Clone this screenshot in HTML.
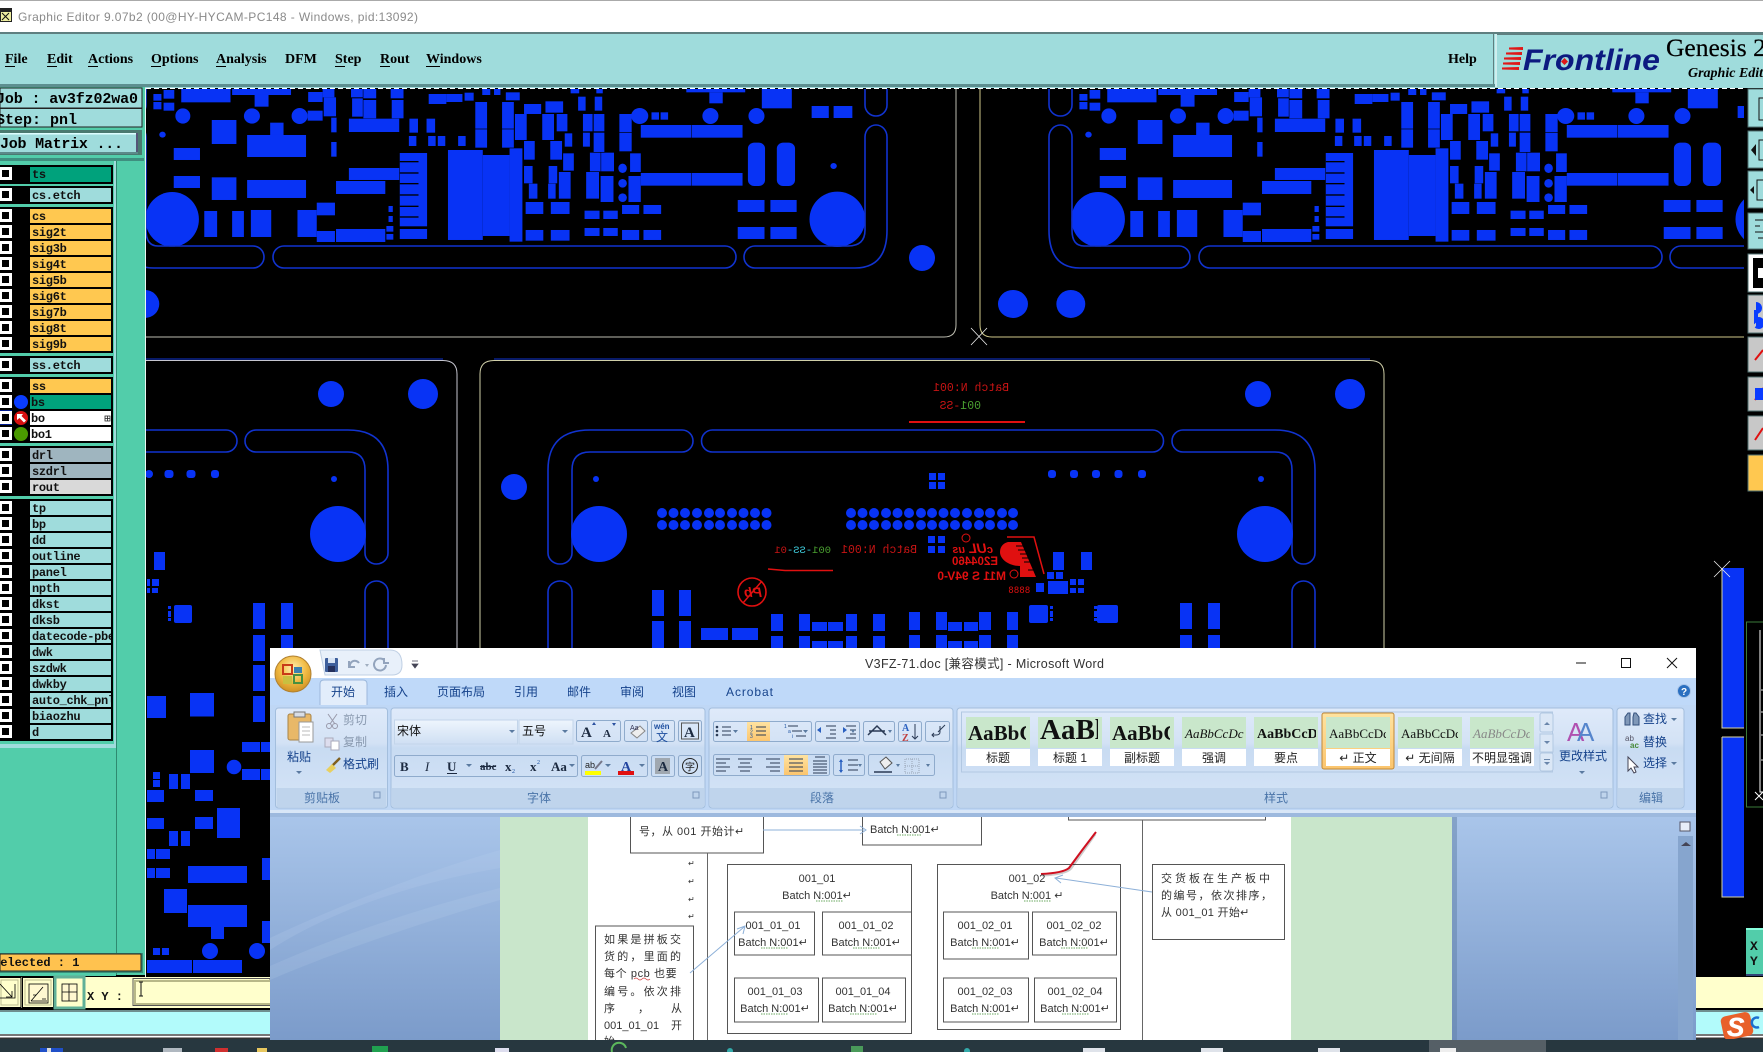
<!DOCTYPE html>
<html><head><meta charset="utf-8"><title>Graphic Editor</title>
<style>
html,body{margin:0;padding:0;background:#000;width:1763px;height:1052px;overflow:hidden}
svg{display:block}
.m{font-family:"Liberation Serif",serif;font-weight:bold;font-size:14px;fill:#000}
.job{font-family:"Liberation Mono",monospace;font-size:15px;font-weight:bold;fill:#000}
.l text{font-family:"Liberation Mono",monospace;font-weight:bold;font-size:12px;letter-spacing:-.3px;fill:#111}
.cj{font-family:"Liberation Sans","Noto Sans CJK SC",sans-serif;font-size:12px}
.tb{fill:#15428b}.gl{fill:#4a74a8;text-anchor:middle}
.d{font-family:"Liberation Sans","Noto Sans CJK SC",sans-serif;font-size:11px;fill:#333}
.dc{text-anchor:middle}
.sl{text-anchor:middle;fill:#222}
.mir{font-family:"Liberation Mono",monospace;font-size:11.5px}
.box{fill:#fff;stroke:#555;stroke-width:1}
.rb{fill:none;stroke:#8fabcc;stroke-width:1}
</style></head><body>
<svg xmlns="http://www.w3.org/2000/svg" width="1763" height="1052" viewBox="0 0 1763 1052">
<defs>
<clipPath id="cv"><rect x="146" y="89" width="1598" height="888"/></clipPath>
<clipPath id="w"><rect x="270" y="817" width="1426" height="223"/></clipPath>
<linearGradient id="gp" x1="0" y1="0" x2="0" y2="1"><stop offset="0" stop-color="#dfeafa"/><stop offset=".35" stop-color="#d3e2f5"/><stop offset=".4" stop-color="#c8dbf2"/><stop offset="1" stop-color="#d6e5f7"/></linearGradient>
<linearGradient id="gd" x1="0" y1="0" x2="0" y2="1"><stop offset="0" stop-color="#a9c5ea"/><stop offset="1" stop-color="#7b9bca"/></linearGradient>
<linearGradient id="gh" x1="0" y1="0" x2="0" y2="1"><stop offset="0" stop-color="#ffe3a0"/><stop offset="1" stop-color="#fbc56e"/></linearGradient>
<radialGradient id="go" cx=".5" cy=".35" r=".7"><stop offset="0" stop-color="#fff0b0"/><stop offset=".55" stop-color="#f0b840"/><stop offset="1" stop-color="#c88a20"/></radialGradient>
<linearGradient id="gb" x1="0" y1="0" x2="0" y2="1"><stop offset="0" stop-color="#eef5fd"/><stop offset="1" stop-color="#cfdff3"/></linearGradient>
<g id="c"><rect width="12" height="13" fill="#fff"/><rect x="2" y="3" width="7" height="7" fill="#000"/></g>
<g id="pcb" transform="translate(140,80) scale(.5356,.3333)" fill="#0833f5">
<rect x="25" y="42" width="15" height="20"/><rect x="25" y="66" width="15" height="22"/><rect x="44" y="30" width="20" height="26"/><rect x="44" y="68" width="20" height="24"/>
<rect x="77" y="25" width="92" height="42"/><rect x="172" y="25" width="110" height="20"/><rect x="214" y="45" width="26" height="35"/>
<rect x="314" y="36" width="27" height="30"/><rect x="341" y="25" width="22" height="27"/><rect x="343" y="52" width="23" height="57"/>
<rect x="394" y="25" width="22" height="27"/><rect x="417" y="25" width="24" height="30"/><rect x="396" y="55" width="20" height="55"/><rect x="417" y="60" width="24" height="55"/>
<rect x="468" y="25" width="24" height="30"/><rect x="470" y="60" width="22" height="55"/>
<ellipse cx="80" cy="108" rx="14" ry="23"/><ellipse cx="209" cy="108" rx="15" ry="23"/><ellipse cx="298" cy="108" rx="15" ry="24"/>
<rect x="313" y="92" width="28" height="30"/><ellipse cx="42" cy="164" rx="6" ry="9"/>
<rect x="134" y="120" width="46" height="72"/><rect x="243" y="128" width="25" height="40"/><rect x="200" y="165" width="110" height="66"/>
<rect x="63" y="204" width="49" height="36"/><rect x="63" y="288" width="49" height="36"/><rect x="134" y="292" width="46" height="68"/><rect x="200" y="300" width="110" height="54"/>
<ellipse cx="60" cy="418" rx="50" ry="82"/>
<rect x="120" y="393" width="24" height="78"/><rect x="172" y="393" width="22" height="78"/><rect x="207" y="390" width="38" height="81"/><rect x="294" y="390" width="36" height="81"/>
<rect x="330" y="368" width="34" height="38"/><rect x="330" y="453" width="34" height="33"/><rect x="366" y="447" width="92" height="39"/>
<rect x="366" y="303" width="92" height="39"/><rect x="390" y="264" width="94" height="36"/><rect x="390" y="116" width="94" height="40"/>
<rect x="357" y="113" width="10" height="44"/><rect x="357" y="186" width="10" height="44"/>
<rect x="503" y="116" width="16" height="42"/><rect x="535" y="116" width="16" height="42"/>
<rect x="502" y="168" width="14" height="30"/><rect x="538" y="168" width="14" height="30"/><rect x="556" y="168" width="14" height="30"/><rect x="594" y="168" width="14" height="30"/>
<rect x="464" y="378" width="8" height="18"/><rect x="464" y="408" width="8" height="18"/><rect x="460" y="438" width="13" height="17"/><rect x="460" y="462" width="13" height="17"/>
<rect x="485" y="219" width="51" height="220"/><rect x="485" y="447" width="51" height="30"/>
<g fill="#000"><rect x="485" y="243" width="35" height="4"/><rect x="485" y="277" width="35" height="4"/><rect x="485" y="309" width="35" height="4"/><rect x="485" y="343" width="35" height="4"/><rect x="485" y="377" width="35" height="4"/><rect x="485" y="409" width="35" height="4"/></g>
<rect x="575" y="210" width="65" height="270"/><rect x="640" y="225" width="50" height="243"/><rect x="690" y="205" width="24" height="280"/>
<rect x="539" y="42" width="33" height="30"/><rect x="572" y="42" width="30" height="24"/><rect x="606" y="38" width="17" height="24"/><rect x="683" y="37" width="26" height="24"/><rect x="639" y="25" width="15" height="20"/><rect x="661" y="25" width="12" height="20"/>
<rect x="626" y="66" width="22" height="80"/><rect x="626" y="148" width="22" height="55"/><rect x="676" y="66" width="22" height="80"/><rect x="676" y="148" width="22" height="55"/>
<rect x="700" y="102" width="22" height="78"/><rect x="717" y="72" width="32" height="30"/><rect x="757" y="64" width="33" height="34"/><rect x="751" y="102" width="22" height="78"/><rect x="778" y="102" width="20" height="52"/>
<rect x="717" y="183" width="20" height="56"/><rect x="766" y="183" width="22" height="56"/><rect x="793" y="160" width="14" height="40"/><rect x="790" y="220" width="20" height="52"/>
<rect x="717" y="258" width="16" height="52"/><rect x="763" y="258" width="16" height="52"/><rect x="726" y="311" width="16" height="45"/><rect x="762" y="311" width="14" height="45"/><rect x="782" y="276" width="22" height="80"/>
<rect x="720" y="366" width="33" height="36"/><rect x="767" y="366" width="35" height="36"/><rect x="720" y="450" width="33" height="32"/><rect x="767" y="450" width="35" height="32"/>
<rect x="818" y="50" width="14" height="42"/><rect x="849" y="50" width="14" height="42"/><rect x="804" y="25" width="16" height="15"/><rect x="852" y="25" width="12" height="15"/>
<rect x="827" y="102" width="18" height="52"/><rect x="847" y="102" width="20" height="52"/><rect x="827" y="158" width="13" height="42"/><rect x="847" y="158" width="20" height="58"/>
<rect x="840" y="218" width="20" height="56"/><rect x="861" y="218" width="24" height="56"/><rect x="833" y="276" width="24" height="80"/><rect x="860" y="288" width="24" height="78"/>
<ellipse cx="901" cy="265" rx="8" ry="14"/><ellipse cx="901" cy="310" rx="8" ry="13"/><ellipse cx="901" cy="353" rx="8" ry="13"/>
<rect x="915" y="220" width="20" height="56"/><rect x="912" y="288" width="23" height="78"/><rect x="895" y="102" width="23" height="54"/><rect x="895" y="158" width="23" height="56"/>
<ellipse cx="933" cy="108" rx="16" ry="24"/><rect x="955" y="97" width="14" height="22"/><rect x="972" y="97" width="14" height="22"/>
<rect x="935" y="135" width="94" height="38"/><rect x="1030" y="135" width="95" height="38"/><rect x="935" y="279" width="94" height="38"/><rect x="1030" y="279" width="95" height="38"/>
<ellipse cx="1065" cy="108" rx="15" ry="24"/><ellipse cx="1151" cy="108" rx="15" ry="24"/>
<rect x="1135" y="188" width="32" height="130" rx="12" ry="18"/><rect x="1189" y="188" width="34" height="130" rx="12" ry="18"/>
<rect x="1116" y="360" width="50" height="36"/><rect x="1177" y="360" width="49" height="36"/><rect x="1116" y="441" width="50" height="36"/><rect x="1177" y="441" width="49" height="36"/>
<rect x="900" y="375" width="32" height="27"/><rect x="940" y="375" width="33" height="27"/><rect x="900" y="450" width="32" height="30"/><rect x="940" y="450" width="33" height="30"/>
<rect x="830" y="392" width="28" height="25"/><rect x="865" y="392" width="27" height="25"/><rect x="830" y="444" width="28" height="24"/><rect x="865" y="444" width="27" height="24"/>
<ellipse cx="1302" cy="418" rx="52" ry="83"/><ellipse cx="1295" cy="258" rx="6" ry="9"/>
<rect x="1020" y="25" width="110" height="12"/><rect x="1063" y="37" width="25" height="33"/><rect x="1161" y="25" width="56" height="60"/><rect x="1254" y="78" width="32" height="36"/><rect x="1295" y="78" width="35" height="36"/>
<ellipse cx="9" cy="672" rx="27" ry="42"/><ellipse cx="-99" cy="672" rx="28" ry="42"/>
</g>
<g id="ch" fill="none" stroke="#1133cf" stroke-width="1.6">
<path d="M158,246H253a11,11 0 0 1 0,22H154Q123,268 123,230V137a11.5,12 0 0 1 23,0V230Q146,246 158,246Z"/>
<path d="M123,88V105a11.5,11 0 0 0 23,0V88"/>
<rect x="273" y="246" width="463" height="22" rx="11"/>
<path d="M755,246H848Q865,246 865,230V137a11,12 0 0 1 22,0V230Q887,268 855,268H755a11,11 0 0 1 0,-22Z"/>
<path d="M865,88V105a11,11 0 0 0 22,0V88"/>
</g>
</defs>

<!-- canvas -->
<rect width="1763" height="1052" fill="#000"/>
<g clip-path="url(#cv)">
<use href="#pcb"/><use href="#pcb" x="926"/>
<use href="#ch"/><use href="#ch" x="926"/>
<ellipse cx="922" cy="258" rx="13" ry="13" fill="#0833f5"/>
<path d="M956,88V325Q956,337 944,337H146" fill="none" stroke="#bdbdb0" stroke-width="1"/>
<path d="M980,88V325Q980,337 992,337H1744" fill="none" stroke="#cfc98a" stroke-width="1"/>
<path d="M971,328L987,345M987,328L971,345" stroke="#eee" stroke-width=".8"/>
<path d="M146,359H443M494,359H1370" stroke="#1133cf" stroke-width="1"/>
<path d="M146,360.5H443Q457,360.5 457,374V660" fill="none" stroke="#c6c6d0" stroke-width="1"/>
<path d="M480,660V374Q480,360.5 494,360.5H1370Q1384,360.5 1384,374V660" fill="none" stroke="#d0cfa8" stroke-width="1"/>
<g fill="none" stroke="#1133cf" stroke-width="1.6">
<path d="M146,430H226a11,11 0 0 1 0,22H146"/>
<path d="M256,430H348Q388,430 388,470V553a11.5,11 0 0 1 -23,0V470Q365,452 348,452H256a11,11 0 0 1 0,-22Z"/>
<path d="M365,660V592a11.5,11 0 0 1 23,0V660"/>
<path d="M682,430H590Q548,430 548,470V553a12,11 0 0 0 24,0V470Q572,452 590,452H682a11,11 0 0 0 0,-22Z"/>
<path d="M548,660V592a12,11 0 0 1 24,0V660"/>
<rect x="701.5" y="430" width="462" height="22" rx="11"/>
<path d="M1183,430H1275Q1315,430 1315,470V553a11.5,11 0 0 1 -23,0V470Q1292,452 1275,452H1183a11,11 0 0 1 0,-22Z"/>
<path d="M1292,660V592a11.5,11 0 0 1 23,0V660"/>
</g>
<g fill="#0833f5">
<circle cx="331" cy="394" r="13"/><circle cx="423" cy="394" r="15"/><circle cx="1258" cy="394" r="13"/><circle cx="1350" cy="394" r="15"/><circle cx="514" cy="487" r="13"/>
<circle cx="338" cy="534" r="28"/><circle cx="599" cy="534" r="28"/><circle cx="1265" cy="534" r="28"/>
<circle cx="334" cy="479" r="3"/><circle cx="596" cy="479" r="3"/><circle cx="1261" cy="479" r="3"/>
<circle cx="149" cy="474" r="4"/><rect x="164.500" y="470" width="9" height="8" rx="3"/><rect x="186.500" y="470" width="9" height="8" rx="3"/><rect x="211" y="470" width="8" height="8" rx="3"/>
<rect x="1048" y="470" width="8" height="8" rx="3"/><rect x="1070" y="470" width="8" height="8" rx="3"/><rect x="1092" y="470" width="8" height="8" rx="3"/><rect x="1114.500" y="470" width="8" height="8" rx="3"/><rect x="1138" y="470" width="8" height="8" rx="3"/>
<rect x="154" y="552" width="11" height="18"/><rect x="152" y="579" width="7" height="7"/><rect x="152" y="588" width="6" height="5"/><rect x="147" y="579" width="3" height="7"/><rect x="147" y="588" width="3" height="5"/>
<rect x="174" y="605" width="18" height="18" rx="2"/><rect x="168" y="606" width="3" height="3"/><rect x="168" y="611" width="3" height="6"/><rect x="168" y="618" width="3" height="3"/>
<rect x="253" y="603" width="12" height="26"/><rect x="281" y="603" width="12" height="26"/><rect x="253" y="635" width="12" height="26"/><rect x="281" y="635" width="12" height="26"/><rect x="253" y="665" width="12" height="26"/><rect x="253" y="696" width="12" height="26"/>
<rect x="147" y="696" width="19" height="22"/><rect x="190" y="693" width="24" height="23.5"/><rect x="242" y="742" width="18" height="10"/><rect x="261" y="742" width="9" height="10"/>
<rect x="190" y="750" width="24" height="23"/><circle cx="234" cy="767" r="7.3"/><rect x="242" y="769" width="18" height="11"/><rect x="261" y="769" width="9" height="11"/>
<rect x="153" y="772" width="7" height="7"/><rect x="153" y="780" width="7" height="7"/><rect x="169" y="774" width="9" height="15"/><rect x="181" y="774" width="9" height="15"/>
<rect x="147" y="790" width="17" height="12"/><rect x="195" y="790" width="18" height="11"/><rect x="147" y="818" width="17" height="11"/><rect x="195" y="817" width="18" height="12"/><rect x="217" y="808" width="23" height="30"/>
<rect x="169" y="831" width="9" height="15"/><rect x="181" y="831" width="9" height="15"/>
<rect x="147" y="849" width="8" height="10"/><rect x="156" y="849" width="14" height="10"/><rect x="147" y="868" width="8" height="10"/><rect x="156" y="868" width="14" height="10"/>
<rect x="188" y="866" width="59" height="17"/><rect x="262" y="858" width="8" height="22"/><rect x="164" y="889" width="23" height="24"/>
<rect x="188" y="905" width="59" height="22"/><rect x="211" y="927" width="13" height="12"/><rect x="262" y="921" width="8" height="22"/>
<rect x="153" y="948" width="7" height="7"/><rect x="162" y="948" width="7" height="7"/><circle cx="210" cy="951" r="8"/><circle cx="257" cy="951" r="8"/>
<rect x="147" y="960" width="45" height="13"/><rect x="193" y="960" width="49" height="13"/>
<rect x="929" y="473" width="7" height="7"/><rect x="938" y="473" width="7" height="7"/><rect x="929" y="482" width="7" height="7"/><rect x="938" y="482" width="7" height="7"/>
<rect x="928" y="536" width="7" height="7"/><rect x="938" y="536" width="7" height="7"/><rect x="928" y="546" width="7" height="7"/><rect x="938" y="546" width="7" height="7"/>
<rect x="1036" y="583" width="8" height="9"/><rect x="1048" y="581" width="20" height="13"/><rect x="1047" y="572" width="7" height="7"/><rect x="1056" y="572" width="7" height="7"/>
<rect x="1053" y="552" width="11" height="18"/><rect x="1081" y="552" width="11" height="18"/>
<rect x="1070" y="579" width="6" height="6"/><rect x="1078" y="579" width="6" height="6"/><rect x="1070" y="588" width="6" height="5"/><rect x="1078" y="588" width="6" height="5"/>
<rect x="1029" y="605" width="19" height="18" rx="2"/><rect x="1050" y="606" width="3" height="3"/><rect x="1050" y="611" width="3" height="6"/><rect x="1050" y="618" width="3" height="3"/>
<rect x="1097" y="605" width="21" height="18" rx="2"/><rect x="1094" y="606" width="3" height="3"/><rect x="1094" y="611" width="3" height="6"/><rect x="1094" y="618" width="3" height="3"/>
<rect x="1180" y="603" width="12" height="26"/><rect x="1180" y="635" width="12" height="18"/><rect x="1208" y="603" width="12" height="26"/><rect x="1208" y="635" width="12" height="18"/>
<rect x="652" y="590" width="12" height="26"/><rect x="679" y="590" width="12" height="26"/><rect x="652" y="621" width="12" height="27"/><rect x="679" y="621" width="12" height="27"/>
<rect x="701" y="628" width="27" height="12"/><rect x="732" y="628" width="26" height="12"/>
<rect x="771" y="614" width="12" height="17"/><rect x="771" y="636" width="12" height="12"/>
<rect x="799" y="614" width="11" height="17"/><rect x="846" y="614" width="11" height="17"/><rect x="812" y="622" width="15" height="9"/><rect x="828" y="622" width="15" height="9"/><rect x="799" y="636" width="11" height="12"/><rect x="846" y="636" width="11" height="12"/><rect x="812" y="641" width="15" height="8"/><rect x="828" y="641" width="15" height="8"/>
<rect x="873" y="614" width="12" height="17"/><rect x="873" y="636" width="12" height="12"/>
<rect x="909" y="612" width="11" height="18"/><rect x="936" y="612" width="11" height="18"/><rect x="979" y="612" width="12" height="18"/><rect x="948" y="622" width="14" height="9"/><rect x="964" y="622" width="14" height="9"/><rect x="1007" y="612" width="11" height="18"/>
<rect x="909" y="635" width="11" height="14"/><rect x="936" y="635" width="11" height="14"/><rect x="979" y="635" width="12" height="14"/><rect x="948" y="641" width="14" height="8"/><rect x="964" y="641" width="14" height="8"/><rect x="1007" y="635" width="11" height="14"/>
</g>
<g fill="#0833f5" id="dots">
<circle cx="662" cy="513" r="5"/><circle cx="673.500" cy="513" r="5"/><circle cx="685" cy="513" r="5"/><circle cx="697" cy="513" r="5"/><circle cx="709" cy="513" r="5"/><circle cx="720" cy="513" r="5"/><circle cx="732" cy="513" r="5"/><circle cx="743.500" cy="513" r="5"/><circle cx="755" cy="513" r="5"/><circle cx="766.500" cy="513" r="5"/>
<circle cx="662" cy="525" r="5"/><circle cx="673.500" cy="525" r="5"/><circle cx="685" cy="525" r="5"/><circle cx="697" cy="525" r="5"/><circle cx="709" cy="525" r="5"/><circle cx="720" cy="525" r="5"/><circle cx="732" cy="525" r="5"/><circle cx="743.500" cy="525" r="5"/><circle cx="755" cy="525" r="5"/><circle cx="766.500" cy="525" r="5"/>
<circle cx="851" cy="513" r="5"/><circle cx="862.500" cy="513" r="5"/><circle cx="874" cy="513" r="5"/><circle cx="886" cy="513" r="5"/><circle cx="897.500" cy="513" r="5"/><circle cx="909" cy="513" r="5"/><circle cx="921" cy="513" r="5"/><circle cx="932" cy="513" r="5"/><circle cx="943.500" cy="513" r="5"/><circle cx="955" cy="513" r="5"/><circle cx="967" cy="513" r="5"/><circle cx="979" cy="513" r="5"/><circle cx="990" cy="513" r="5"/><circle cx="1002" cy="513" r="5"/><circle cx="1013" cy="513" r="5"/>
<circle cx="851" cy="525" r="5"/><circle cx="862.500" cy="525" r="5"/><circle cx="874" cy="525" r="5"/><circle cx="886" cy="525" r="5"/><circle cx="897.500" cy="525" r="5"/><circle cx="909" cy="525" r="5"/><circle cx="921" cy="525" r="5"/><circle cx="932" cy="525" r="5"/><circle cx="943.500" cy="525" r="5"/><circle cx="955" cy="525" r="5"/><circle cx="967" cy="525" r="5"/><circle cx="979" cy="525" r="5"/><circle cx="990" cy="525" r="5"/><circle cx="1002" cy="525" r="5"/><circle cx="1013" cy="525" r="5"/>
</g>
<text class="mir" transform="translate(1009,391) scale(-1,1)" fill="#c81414">Batch N:001</text>
<text class="mir" transform="translate(981,409) scale(-1,1)"><tspan fill="#4aa030">001</tspan><tspan fill="#c81414">-SS</tspan></text>
<rect x="909" y="421" width="116" height="2" fill="#e01010"/>
<text class="mir" transform="translate(917,553) scale(-1,1)" fill="#c81414">Batch N:001</text>
<text class="mir" transform="translate(831,553) scale(-1,1)" style="font-size:10.500px"><tspan fill="#4aa030">001</tspan><tspan fill="#40d0e0">-SS-</tspan><tspan fill="#c81414">01</tspan></text>
<path d="M768,569L785,570.500H833" stroke="#e01010" stroke-width="1.600" fill="none"/>
<circle cx="752" cy="592" r="14" fill="none" stroke="#e01010" stroke-width="1.600"/>
<text transform="translate(762,597) scale(-1,1)" font-family="Liberation Sans,sans-serif" font-weight="bold" font-style="italic" font-size="14" fill="#e01010">Pb</text>
<path d="M743,603L762,581" stroke="#e01010" stroke-width="1.500"/>
<g fill="#e01010" font-family="Liberation Sans,sans-serif" font-weight="bold">
<text transform="translate(998,565) scale(-1,1)" font-size="11.500">E204460</text>
<text transform="translate(1006,580) scale(-1,1)" font-size="12">M11 S 94V-0</text>
<text transform="translate(993,553) scale(-1,1)" font-size="11" font-style="italic">c<tspan font-size="14">UL</tspan> us</text>
<text transform="translate(1030,593) scale(-1,1)" font-size="9" font-weight="normal" letter-spacing=".5">8888</text>
<circle cx="966" cy="538" r="4" fill="none" stroke="#e01010"/><circle cx="1014" cy="574" r="4" fill="none" stroke="#e01010"/>
<path d="M1008,542H1021L1036,577H1020V566C1010,566 1000,560 1000,552C1000,546 1004,543 1008,542Z"/>
</g>
<path d="M1007,537H1034L1044,574" fill="none" stroke="#e01010" stroke-width="1.500"/>
<g stroke="#000" stroke-width="1"><path d="M1016,546H1030M1018,550H1032M1020,554H1034M1022,558H1034M1024,562H1036M1028,570H1036"/></g>
<rect x="1722" y="568" width="24" height="160" fill="#0833f5"/>
<rect x="1722" y="737" width="24" height="160" fill="#0833f5"/>
<path d="M1722,568V728H1744M1722,737H1744M1722,737V897H1744" fill="none" stroke="#d7d6a6" stroke-width="1"/>
<path d="M1714,561L1730,577M1730,561L1714,577" stroke="#eee" stroke-width=".8"/>
</g>
<path d="M146,88.500H1744" stroke="#fff" stroke-dasharray="5 3" stroke-width="1"/>

<!-- title bar & menu -->
<rect width="1763" height="33" fill="#fff"/><rect width="1763" height="1" fill="#aaa"/>
<rect y="8" width="12" height="14" fill="#222"/><rect x="1" y="12" width="10" height="9" fill="#eeeea0"/><path d="M2,13L9,20M9,13L2,20" stroke="#111"/>
<text x="18" y="21" font-family="Liberation Sans,sans-serif" font-size="12" fill="#8a8a8a" textLength="400">Graphic Editor 9.07b2 (00@HY-HYCAM-PC148 - Windows, pid:13092)</text>
<rect y="32" width="1763" height="2" fill="#5f7f80"/>
<rect y="34" width="1763" height="50" fill="#9fdcdc"/>
<rect y="84" width="1763" height="3" fill="#5d8f90"/><rect y="87" width="1763" height="1" fill="#9fdcdc"/>
<rect x="1493" y="34" width="1" height="50" fill="#5f7f80"/><rect x="1495" y="34" width="2" height="53" fill="#cfeeee"/>
<rect x="1497" y="33" width="266" height="2" fill="#5f7f80"/>
<rect x="1497" y="35" width="266" height="52" fill="#9fdcdc"/>
<text class="m" x="5" y="63">File</text><text class="m" x="47" y="63">Edit</text><text class="m" x="88" y="63">Actions</text><text class="m" x="151" y="63">Options</text><text class="m" x="216" y="63">Analysis</text><text class="m" x="285" y="63">DFM</text><text class="m" x="335" y="63">Step</text><text class="m" x="380" y="63">Rout</text><text class="m" x="426" y="63">Windows</text><text class="m" x="1448" y="63">Help</text>
<g fill="#000"><rect x="5" y="66" width="10" height="1"/><rect x="47" y="66" width="10" height="1"/><rect x="88" y="66" width="10" height="1"/><rect x="151" y="66" width="10" height="1"/><rect x="216" y="66" width="10" height="1"/><rect x="335" y="66" width="10" height="1"/><rect x="380" y="66" width="10" height="1"/><rect x="426" y="66" width="14" height="1"/></g>
<g fill="#e01818"><path d="M1509,47.500L1523,47V50L1509,49.500Z"/><path d="M1506,52.500L1522,52V55L1506,54.500Z"/><path d="M1504,57.500L1521,57V60L1504,59.500Z"/><path d="M1503,62.500L1520,62V65L1503,64.500Z"/><path d="M1502,67.500L1519,67V70L1502,69.500Z"/></g>
<text x="1523" y="70" font-family="Liberation Sans,sans-serif" font-weight="bold" font-style="italic" font-size="30" fill="#0c1a80" textLength="137" lengthAdjust="spacingAndGlyphs">Frontline</text>
<path d="M1564.500,58L1568,61.600L1564.500,65L1561,61.600Z" fill="#e01818"/>
<text x="1666" y="56" font-family="Liberation Serif,serif" font-size="25.500" fill="#000" stroke="#000" stroke-width=".2">Genesis 2</text>
<text x="1688" y="77" font-family="Liberation Serif,serif" font-weight="bold" font-style="italic" font-size="14" fill="#000">Graphic Editor</text>

<!-- left panel -->
<rect y="87" width="145" height="888" fill="#52cdaa"/>
<rect x="145" y="88" width="1" height="890" fill="#e8f8f2"/>
<rect y="88" width="142" height="20" fill="#9fdcdc" stroke="#222" stroke-width="1"/>
<rect y="108.500" width="142" height="18.500" fill="#9fdcdc" stroke="#222" stroke-width="1"/>
<text class="job" x="-4" y="103" textLength="142">Job : av3fz02wa0</text>
<text class="job" x="-4" y="124">Step: pnl</text>
<rect y="130" width="142" height="25" fill="#4a7a70"/>
<rect y="133" width="137" height="20" fill="#9fdcdc"/>
<rect y="133" width="137" height="1.500" fill="#dff"/><rect x="136" y="133" width="2" height="20" fill="#557"/><rect y="152" width="138" height="2" fill="#5c8a8a"/>
<text class="job" x="0" y="148" textLength="123">Job Matrix ...</text>
<rect y="158" width="144" height="3" fill="#3f8f7f"/><rect x="116" y="161" width="1" height="814" fill="#2e8a70"/>
<rect x="0" y="161" width="116" height="587" fill="#9fdcdc"/>
<rect x="0" y="161" width="114" height="583" fill="#52cdaa"/>
<rect x="0" y="744" width="116" height="4" fill="#9fdcdc"/><rect x="0" y="748" width="116" height="228" fill="#52cdaa"/>
<rect x="117" y="161" width="28" height="814" fill="#52cdaa"/>
<g fill="#000"><rect y="165" width="113" height="19"/><rect y="186" width="113" height="18"/><rect y="207" width="113" height="146"/><rect y="356" width="113" height="18"/><rect y="377" width="113" height="66"/><rect y="446" width="113" height="50"/><rect y="499" width="113" height="242"/></g>
<g class="l">
<use href="#c" y="167"/><rect x="30" y="167" width="81" height="15" fill="#00a27c"/><text x="32" y="178">ts</text>
<use href="#c" y="188"/><rect x="30" y="188" width="81" height="14" fill="#9fdcdc"/><text x="32" y="199">cs.etch</text>
<use href="#c" y="209"/><rect x="30" y="209" width="81" height="14" fill="#ffc850"/><text x="32" y="220">cs</text>
<use href="#c" y="225"/><rect x="30" y="225" width="81" height="14" fill="#ffc850"/><text x="32" y="236">sig2t</text>
<use href="#c" y="241"/><rect x="30" y="241" width="81" height="14" fill="#ffc850"/><text x="32" y="252">sig3b</text>
<use href="#c" y="257"/><rect x="30" y="257" width="81" height="14" fill="#ffc850"/><text x="32" y="268">sig4t</text>
<use href="#c" y="273"/><rect x="30" y="273" width="81" height="14" fill="#ffc850"/><text x="32" y="284">sig5b</text>
<use href="#c" y="289"/><rect x="30" y="289" width="81" height="14" fill="#ffc850"/><text x="32" y="300">sig6t</text>
<use href="#c" y="305"/><rect x="30" y="305" width="81" height="14" fill="#ffc850"/><text x="32" y="316">sig7b</text>
<use href="#c" y="321"/><rect x="30" y="321" width="81" height="14" fill="#ffc850"/><text x="32" y="332">sig8t</text>
<use href="#c" y="337"/><rect x="30" y="337" width="81" height="14" fill="#ffc850"/><text x="32" y="348">sig9b</text>
<use href="#c" y="358"/><rect x="30" y="358" width="81" height="14" fill="#9fdcdc"/><text x="32" y="369">ss.etch</text>
<use href="#c" y="379"/><rect x="30" y="379" width="81" height="14" fill="#ffc850"/><text x="32" y="390">ss</text>
<use href="#c" y="395"/><rect x="30" y="395" width="81" height="14" fill="#00a27c"/><text x="31" y="406">bs</text>
<rect y="410" width="12" height="15" fill="#001a90"/><use href="#c" y="411"/><rect x="30" y="411" width="81" height="14" fill="#fff"/><text x="31" y="422">bo</text>
<use href="#c" y="427"/><rect x="30" y="427" width="81" height="14" fill="#fff"/><text x="31" y="438">bo1</text>
<use href="#c" y="448"/><rect x="30" y="448" width="81" height="14" fill="#9fb5bf"/><text x="32" y="459">drl</text>
<use href="#c" y="464"/><rect x="30" y="464" width="81" height="14" fill="#9fb5bf"/><text x="32" y="475">szdrl</text>
<use href="#c" y="480"/><rect x="30" y="480" width="81" height="14" fill="#d9d9d9"/><text x="32" y="491">rout</text>
<use href="#c" y="501"/><rect x="30" y="501" width="81" height="14" fill="#9fdcdc"/><text x="32" y="512">tp</text>
<use href="#c" y="517"/><rect x="30" y="517" width="81" height="14" fill="#9fdcdc"/><text x="32" y="528">bp</text>
<use href="#c" y="533"/><rect x="30" y="533" width="81" height="14" fill="#9fdcdc"/><text x="32" y="544">dd</text>
<use href="#c" y="549"/><rect x="30" y="549" width="81" height="14" fill="#9fdcdc"/><text x="32" y="560">outline</text>
<use href="#c" y="565"/><rect x="30" y="565" width="81" height="14" fill="#9fdcdc"/><text x="32" y="576">panel</text>
<use href="#c" y="581"/><rect x="30" y="581" width="81" height="14" fill="#9fdcdc"/><text x="32" y="592">npth</text>
<use href="#c" y="597"/><rect x="30" y="597" width="81" height="14" fill="#9fdcdc"/><text x="32" y="608">dkst</text>
<use href="#c" y="613"/><rect x="30" y="613" width="81" height="14" fill="#9fdcdc"/><text x="32" y="624">dksb</text>
<use href="#c" y="629"/><rect x="30" y="629" width="81" height="14" fill="#9fdcdc"/><svg x="30" y="629" width="81" height="14"><text x="2" y="11">datecode-pbe</text></svg>
<use href="#c" y="645"/><rect x="30" y="645" width="81" height="14" fill="#9fdcdc"/><text x="32" y="656">dwk</text>
<use href="#c" y="661"/><rect x="30" y="661" width="81" height="14" fill="#9fdcdc"/><text x="32" y="672">szdwk</text>
<use href="#c" y="677"/><rect x="30" y="677" width="81" height="14" fill="#9fdcdc"/><text x="32" y="688">dwkby</text>
<use href="#c" y="693"/><rect x="30" y="693" width="81" height="14" fill="#9fdcdc"/><svg x="30" y="693" width="81" height="14"><text x="2" y="11">auto_chk_pnl</text></svg>
<use href="#c" y="709"/><rect x="30" y="709" width="81" height="14" fill="#9fdcdc"/><text x="32" y="720">biaozhu</text>
<use href="#c" y="725"/><rect x="30" y="725" width="81" height="14" fill="#9fdcdc"/><text x="32" y="736">d</text>
</g>
<circle cx="21" cy="402" r="7" fill="#0a3cff"/>
<circle cx="21" cy="418" r="7" fill="#d81010"/><path d="M17,414H23L21.500,416L26,420.500L24,422.500L19.500,418L17,420Z" fill="#fff"/>
<circle cx="21" cy="434" r="7" fill="#4a9a00"/>
<path d="M105,416H110V421H105ZM107.500,416V421M105,418.500H110" fill="none" stroke="#222" stroke-width=".8"/>
<rect y="953" width="143" height="20" fill="#3a8f7a"/><rect y="954" width="141" height="17" fill="#ffc24f" stroke="#222" stroke-width="1"/>
<text x="-7" y="966" font-family="Liberation Mono,monospace" font-weight="bold" font-size="12" fill="#111">Selected : 1</text>

<!-- bottom bars -->
<rect y="977" width="1763" height="32" fill="#ffffcc"/>
<rect y="1008" width="1763" height="2" fill="#000"/><rect y="1010" width="1763" height="2" fill="#6f8f8f"/>
<rect y="1012" width="1763" height="23" fill="#b2fbfb"/><rect y="1034" width="1763" height="2" fill="#777"/><rect y="1036" width="1763" height="1.500" fill="#fff"/><rect y="1037.500" width="1763" height="1.500" fill="#333"/>
<g fill="none" stroke="#000">
<rect x="-2" y="977.500" width="23" height="30" fill="#ffffcc"/><rect x="1" y="980" width="17" height="25" stroke="#bcbc90"/>
<rect x="22.500" y="977.500" width="31" height="30" fill="#ffffcc"/><rect x="25" y="980" width="26" height="25" stroke="#bcbc90"/>
<rect x="55" y="977" width="29" height="31" fill="#ffffcc" stroke="#60b098" stroke-width="3"/>
<path d="M0,984L12,997M12,991V997H6M0,998H15V984" stroke-width=".8"/>
<rect x="29" y="984" width="19" height="19" fill="#fff8d0" stroke-width=".8"/><path d="M31,1001L43,987M31,1001H47M33,995H36M42,999H46" stroke-width=".8"/>
<rect x="62" y="984" width="15" height="17" fill="#fff8d0" stroke-width=".8"/><path d="M62,992H77M69,984V1001" stroke-width=".8"/>
</g>
<text x="87" y="1000" font-family="Liberation Mono,monospace" font-weight="bold" font-size="12" fill="#111">X Y :</text>
<rect x="133" y="978.500" width="137" height="27" fill="#ffffcc" stroke="#555"/><rect x="135" y="981" width="137" height="23" fill="#ffffcc" stroke="#b8b888" stroke-width="2"/>
<path d="M139,982H143M141,982V996M139,996H143" stroke="#111" fill="none"/>

<!-- right tool column -->
<rect x="1746" y="88" width="17" height="840" fill="#000"/>
<g stroke="#4f6f70" stroke-width="1" fill="#9fdcdc">
<rect x="1748" y="89" width="16" height="38"/><rect x="1748" y="131" width="16" height="37"/><rect x="1748" y="171" width="16" height="37"/><rect x="1748" y="213" width="16" height="36"/>
<rect x="1748" y="254" width="16" height="38" fill="#fff"/><rect x="1748" y="295" width="16" height="38" fill="#c8c8c8"/><rect x="1748" y="337" width="16" height="35" fill="#c8c8c8"/><rect x="1748" y="377" width="16" height="34" fill="#c8c8c8"/><rect x="1748" y="416" width="16" height="34" fill="#c8c8c8"/><rect x="1748" y="455" width="16" height="36" fill="#ffc850"/>
</g>
<rect x="1753" y="258" width="10" height="30" fill="#000"/><rect x="1758" y="268" width="6" height="10" fill="#fff"/>
<g fill="none" stroke="#111"><rect x="1759" y="98" width="5" height="22"/><rect x="1759" y="140" width="5" height="20"/><rect x="1757" y="180" width="7" height="20"/><path d="M1755,220H1763M1755,226H1760M1755,232H1763M1758,238H1763"/></g>
<path d="M1751,150L1756,144V156ZM1750,190L1754,186V194Z" fill="#111"/>
<path d="M1756,304a4,4 0 1 1 0,8V320a4,4 0 1 1 0,6" fill="#0a3cff" stroke="#0a3cff" stroke-width="4"/>
<path d="M1755,360L1763,350M1755,400L1763,388M1755,440L1763,428" stroke="#e01010" stroke-width="2"/>
<rect x="1755" y="388" width="8" height="12" fill="#0a3cff"/>
<rect x="1746.500" y="622" width="18" height="185" fill="#000" stroke="#3a7a3a"/>
<path d="M1760,630V792H1764" fill="none" stroke="#fff"/><path d="M1755,792L1763,800M1763,792L1755,800" stroke="#fff"/>
<path d="M1761,690h3M1761,712h3M1761,735h3M1761,760h3" stroke="#ddd"/>
<rect x="1746" y="930" width="17" height="44" fill="#52cdaa"/><rect x="1746" y="928" width="17" height="2" fill="#8fd"/>
<rect x="1746" y="974" width="17" height="2" fill="#347"/>
<text x="1750" y="950" font-family="Liberation Mono,monospace" font-weight="bold" font-size="13" fill="#111">X</text>
<text x="1750" y="965" font-family="Liberation Mono,monospace" font-weight="bold" font-size="13" fill="#111">Y</text>
<rect x="1722" y="1014" width="30" height="24" rx="5" fill="#e8612a" transform="rotate(-12 1737 1026)"/>
<text x="1727" y="1036" font-family="Liberation Sans,sans-serif" font-weight="bold" font-style="italic" font-size="26" fill="#fff" stroke="#fff" stroke-width=".5">S</text>
<path d="M1759,1018a5,5 0 1 0 0,9" fill="none" stroke="#1a70d0" stroke-width="2.500"/>

<!-- taskbar -->
<rect y="1039" width="1763" height="13" fill="#27373f"/>
<rect x="1429" y="1039" width="117" height="13" fill="#555f66"/>
<rect x="40" y="1048" width="23" height="4" fill="#2050c8"/><rect x="47" y="1048" width="4" height="4" fill="#ddd"/>
<rect x="163" y="1048" width="19" height="4" fill="#b0b8c0"/><rect x="215" y="1048" width="13" height="4" fill="#d03030"/><rect x="257" y="1048" width="10" height="4" fill="#e8c860"/>
<rect x="372" y="1046" width="16" height="6" fill="#20a050"/><rect x="495" y="1048" width="14" height="4" fill="#dde"/>
<path d="M612,1052a7,7 0 0 1 14,-4" fill="none" stroke="#5cb85c" stroke-width="2"/><circle cx="730" cy="1051" r="3" fill="#3aa"/><rect x="851" y="1046" width="12" height="6" fill="#4a9a5a"/><circle cx="967" cy="1051" r="3" fill="#3aa"/>
<rect x="1083" y="1048" width="22" height="4" fill="#dfe3ea"/><rect x="1201" y="1048" width="22" height="4" fill="#dfe3ea"/><rect x="1318" y="1048" width="22" height="4" fill="#dfe3ea"/><rect x="1440" y="1048" width="16" height="4" fill="#eee"/>

<!-- WORD WINDOW -->
<rect x="270" y="817" width="1426" height="223" fill="url(#gd)"/>
<path d="M270,950C340,905 430,880 500,868V850C430,870 340,905 270,938Z" fill="#bcd2ef" opacity=".2"/>
<path d="M270,980C340,950 430,920 500,900V888C420,908 340,935 270,966Z" fill="#c8dcf3" opacity=".15"/>
<rect x="270" y="648" width="1426" height="31" fill="#fff"/>
<rect x="270" y="678" width="1426" height="139" fill="#bfd9f9"/>
<rect x="270" y="810" width="1426" height="3" fill="#d8e6f7"/><rect x="270" y="813" width="1426" height="4" fill="#9db9de"/>
<path d="M320,650H390Q402,650 402,665Q402,675 392,675H325Z" fill="#e8f0fa" stroke="#c0d0e4"/>
<circle cx="293" cy="674" r="18" fill="url(#go)" stroke="#b08030"/>
<rect x="283" y="665" width="9" height="9" fill="none" stroke="#c83a18" stroke-width="2"/><rect x="294" y="667" width="8" height="6" fill="#3a80b0"/><rect x="283" y="676" width="9" height="8" fill="#c8c040"/><rect x="294" y="675" width="8" height="8" fill="none" stroke="#489040" stroke-width="2"/>
<rect x="325" y="658" width="13" height="14" rx="1" fill="#3e5f9c"/><rect x="328" y="658" width="7" height="5" fill="#d8e4f4"/><rect x="328" y="666" width="7" height="6" fill="#24305c"/>
<path d="M350,667a5,5 0 0 1 9,-4M349,661V667H355" fill="none" stroke="#93a4bd" stroke-width="2"/><path d="M365,664h4l-2,3z" fill="#a0aec0"/>
<path d="M384,660a6,6 0 1 0 2,5M384,658V663H389" fill="none" stroke="#93a4bd" stroke-width="2"/>
<path d="M412,661H418M412,664H418L415,668Z" fill="#445" stroke="#445" stroke-width=".8"/>
<text class="cj" x="865" y="668" fill="#333" textLength="239" style="font-size:12.500px">V3FZ-71.doc [兼容模式] - Microsoft Word</text>
<path d="M1576,663H1586M1621.500,658.500H1630.500V667.500H1621.500ZM1667,658L1677,668M1677,658L1667,668" fill="none" stroke="#111" stroke-width="1"/>
<circle cx="1684" cy="691" r="6.500" fill="#2a6fc0" stroke="#a8c4e8"/><text x="1681" y="695" font-family="Liberation Sans,sans-serif" font-weight="bold" font-size="10" fill="#fff">?</text>
<path d="M320,706V684Q320,680 324,680H363Q367,680 367,684V706Z" fill="#e2edfb" stroke="#9cb8dc"/>
<text class="cj tb" x="331" y="696">开始</text><text class="cj tb" x="384" y="696">插入</text><text class="cj tb" x="437" y="696">页面布局</text><text class="cj tb" x="514" y="696">引用</text><text class="cj tb" x="567" y="696">邮件</text><text class="cj tb" x="620" y="696">审阅</text><text class="cj tb" x="672" y="696">视图</text><text class="cj tb" x="726" y="696" textLength="47">Acrobat</text>
<rect x="270" y="705" width="1426" height="105" fill="#bfd7f5"/>
<g stroke="#a3bedd" fill="url(#gp)">
<rect x="275.500" y="708" width="112" height="100" rx="3"/><rect x="391" y="708" width="314" height="100" rx="3"/><rect x="709" y="708" width="244" height="100" rx="3"/><rect x="957" y="708" width="656" height="100" rx="3"/><rect x="1617" y="708" width="67" height="100" rx="3"/>
</g>
<g fill="#bfd4ec"><rect x="276.500" y="788" width="110" height="19"/><rect x="392" y="788" width="312" height="19"/><rect x="710" y="788" width="242" height="19"/><rect x="958" y="788" width="654" height="19"/><rect x="1618" y="788" width="65" height="19"/></g>
<text class="cj gl" x="322" y="802">剪贴板</text><text class="cj gl" x="539" y="802">字体</text><text class="cj gl" x="822" y="802">段落</text><text class="cj gl" x="1276" y="802">样式</text><text class="cj gl" x="1651" y="802">编辑</text>
<g fill="none" stroke="#7c98bc"><rect x="374" y="792" width="6" height="6"/><rect x="693" y="792" width="6" height="6"/><rect x="940" y="792" width="6" height="6"/><rect x="1601" y="792" width="6" height="6"/></g>
<rect x="288" y="714" width="23" height="26" rx="2" fill="#e8b868" stroke="#a88448"/><rect x="294" y="712" width="11" height="5" fill="#d8dde5" stroke="#777"/>
<path d="M299,722H313V742H299Z" fill="#fff" stroke="#999"/><path d="M302,727H310M302,731H310M302,735H310" stroke="#bbb"/>
<text class="cj" x="287" y="761" fill="#15428b">粘贴</text><path d="M296,771h6l-3,3z" fill="#5a7aa0"/>
<path d="M328,714L335,724M337,714L330,724" stroke="#99a" fill="none"/><circle cx="329" cy="726" r="2.500" fill="none" stroke="#99a"/><circle cx="335" cy="726" r="2.500" fill="none" stroke="#99a"/>
<text class="cj" x="343" y="724" fill="#8a9ab0">剪切</text>
<rect x="325" y="738" width="8" height="9" fill="#dde" stroke="#aab"/><rect x="331" y="741" width="8" height="9" fill="#fff" stroke="#aab"/>
<text class="cj" x="343" y="746" fill="#8a9ab0">复制</text>
<path d="M340,758L332,766" stroke="#806020" stroke-width="2.500"/><path d="M326,770L332,764L336,768L330,773Z" fill="#e8d060"/>
<text class="cj" x="343" y="768" fill="#15428b">格式刷</text>
<rect x="394.500" y="720" width="123" height="24" fill="url(#gb)" stroke="#c3d5ea"/><rect x="519" y="720" width="54" height="24" fill="url(#gb)" stroke="#c3d5ea"/>
<text class="cj" x="397" y="735" fill="#111">宋体</text><text class="cj" x="522" y="735" fill="#111">五号</text>
<path d="M509,730h6l-3,3zM562,730h6l-3,3z" fill="#5a7aa0"/>
<rect class="rb" x="576.500" y="720.500" width="44" height="21" rx="2"/><rect class="rb" x="624.500" y="720.500" width="23" height="21" rx="2"/><rect class="rb" x="651.500" y="720.500" width="23" height="21" rx="2"/><rect class="rb" x="678.500" y="720.500" width="23" height="21" rx="2"/>
<rect class="rb" x="394.500" y="755.500" width="183" height="21" rx="2"/><rect class="rb" x="581.500" y="755.500" width="66" height="21" rx="2"/><rect class="rb" x="651.500" y="755.500" width="23" height="21" rx="2"/><rect class="rb" x="678.500" y="755.500" width="23" height="21" rx="2"/>
<rect class="rb" x="713.500" y="721.500" width="98" height="20" rx="2"/><rect class="rb" x="815.500" y="721.500" width="44" height="20" rx="2"/><rect class="rb" x="863.500" y="721.500" width="31" height="20" rx="2"/><rect class="rb" x="898.500" y="721.500" width="23" height="20" rx="2"/><rect class="rb" x="925.500" y="721.500" width="24" height="20" rx="2"/>
<rect class="rb" x="713.500" y="754.500" width="116" height="21" rx="2"/><rect class="rb" x="833.500" y="754.500" width="31" height="21" rx="2"/><rect class="rb" x="868.500" y="754.500" width="66" height="21" rx="2"/>
<g font-family="Liberation Serif,serif" fill="#1c2a40">
<text x="581" y="737" font-size="15" font-weight="bold">A</text><text x="603" y="737" font-size="11" font-weight="bold">A</text>
<path d="M592,725l2,-3l2,3zM612,723l2,3l2,-3z" fill="#2a50a0"/>
<text x="684" y="737" font-size="15" font-weight="bold">A</text><rect x="681.500" y="723" width="17" height="16" fill="none" stroke="#555"/>
<text x="400" y="771" font-size="13" font-weight="bold">B</text><text x="425" y="771" font-size="13" font-style="italic">I</text><text x="447" y="771" font-size="13" font-weight="bold">U</text><rect x="447" y="773" width="10" height="1" fill="#1c2a40"/>
<text x="480" y="770" font-size="11" font-weight="bold">abc</text><rect x="480" y="766" width="16" height="1" fill="#1c2a40"/>
<text x="505" y="771" font-size="13" font-weight="bold">x</text><text x="512" y="773" font-size="6" fill="#1a50a0">2</text>
<text x="530" y="771" font-size="13" font-weight="bold">x</text><text x="537" y="764" font-size="6" fill="#1a50a0">2</text>
<text x="551" y="771" font-size="13" font-weight="bold">Aa</text>
<text x="621" y="771" font-size="14" font-weight="bold" fill="#2244a0">A</text><rect x="618" y="771" width="16" height="4" fill="#e01010"/>
<rect x="655" y="758" width="15" height="16" fill="#a0a8b0"/><text x="658" y="771" font-size="14" font-weight="bold">A</text>
</g>
<path d="M466,764h6l-3,3zM569,764h6l-3,3zM605,764h6l-3,3zM639,764h6l-3,3z" fill="#5a7aa0"/>
<text x="585" y="768" font-family="Liberation Sans,sans-serif" font-size="9" fill="#222">ab</text><rect x="585" y="771" width="16" height="4" fill="#ffff00"/><path d="M595,769L602,761" stroke="#778" stroke-width="2"/>
<circle cx="690" cy="766" r="7.500" fill="none" stroke="#222"/><text x="685" y="770.500" class="cj" style="font-size:10px" fill="#222">字</text>
<path d="M631,733L640,726L645,731L637,738Z" fill="#eee" stroke="#888"/><text x="630" y="730" font-family="Liberation Sans,sans-serif" font-size="7" fill="#335">Aa</text>
<text x="654" y="729" font-family="Liberation Sans,sans-serif" font-size="8" font-weight="bold" fill="#2050a0">wén</text><text x="656" y="741" class="cj" style="font-size:12px" fill="#2050a0">文</text>
<rect x="747" y="722" width="23" height="19" fill="url(#gh)"/><rect x="784" y="755" width="24" height="20" fill="url(#gh)"/>
<g fill="none" stroke="#2a3a55" stroke-width="1">
<path d="M722,727H731M722,731H731M722,735H731"/>
<path d="M756,727H766M756,731H766M756,735H766"/>
<path d="M788,726H798M792,731H802M796,736H806"/>
<path d="M826,726H836M830,730H836M830,734H836M826,738H836M846,726H856M850,730H856M850,734H856M846,738H856"/>
<path d="M868,735L877,726L886,735M869,731H885" stroke-width="1.500"/>
<path d="M915,724V739M912,736L915,739L918,736"/>
<path d="M940,726V732Q940,735 936,735H932M934,733L932,735L934,737M945,725L938,732"/>
<path d="M716,759H730M716,763H726M716,767H730M716,771H726"/>
<path d="M738,759H752M740,763H750M738,767H752M740,771H750"/>
<path d="M766,759H780M770,763H780M766,767H780M770,771H780"/>
<path d="M789,759H803M789,763H803M789,767H803M789,771H803"/>
<path d="M813,761H827M813,764H827M813,767H827M813,770H827M813,773H827M815,757H825"/>
<path d="M848,760H858M848,765H858M848,770H858"/>
<path d="M905,759V773H919V759ZM905,766H919M912,759V773" stroke="#98a4b4" stroke-dasharray="1 1"/>
<path d="M874,772H892" stroke-width="1.500"/>
</g>
<g fill="#2a3a55"><circle cx="717" cy="727" r="1.300"/><circle cx="717" cy="731" r="1.300"/><circle cx="717" cy="735" r="1.300"/></g>
<g font-family="Liberation Sans,sans-serif" font-size="5" fill="#1a50a0"><text x="750" y="729">1</text><text x="750" y="733.500">2</text><text x="750" y="738">3</text><text x="784" y="728">1</text><text x="788" y="733">a</text><text x="792" y="738">i</text></g>
<path d="M821,727l-4,3l4,3zM843,727l4,3l-4,3z" fill="#2a60c0"/>
<path d="M841,760V772" stroke="#2a60c0" stroke-width="1.500"/><path d="M839,762l2,-3l2,3zM839,770l2,3l2,-3z" fill="#2a60c0"/>
<path d="M880,762L886,757L892,763L885,769Z" fill="#eee" stroke="#555"/>
<g font-family="Liberation Serif,serif" font-size="10" font-weight="bold"><text x="902" y="731" fill="#2a60c0">A</text><text x="902" y="741" fill="#c04040">Z</text></g>
<path d="M733,730h5l-2.500,3zM803,730h5l-2.500,3zM851,730h4l-2,3zM888,730h4l-2,3zM858,764h4l-2,3zM896,764h4l-2,3zM926,764h4l-2,3z" fill="#5a7aa0"/>
<rect x="961.500" y="712" width="591" height="60" fill="none" stroke="#b2c8e2"/>
<rect x="1322" y="713" width="72" height="56" rx="2" fill="url(#gh)" stroke="#c08838"/>
<g fill="#c9e7cb"><rect x="966" y="717" width="64" height="31"/><rect x="1038" y="717" width="64" height="31"/><rect x="1110" y="717" width="64" height="31"/><rect x="1182" y="717" width="64" height="31"/><rect x="1254" y="717" width="64" height="31"/><rect x="1326" y="717" width="64" height="31"/><rect x="1398" y="717" width="64" height="31"/><rect x="1470" y="717" width="64" height="31"/></g>
<g fill="#fff"><rect x="966" y="749" width="64" height="17"/><rect x="1038" y="749" width="64" height="17"/><rect x="1110" y="749" width="64" height="17"/><rect x="1182" y="749" width="64" height="17"/><rect x="1254" y="749" width="64" height="17"/><rect x="1326" y="749" width="64" height="17"/><rect x="1398" y="749" width="64" height="17"/><rect x="1470" y="749" width="64" height="17"/></g>
<g font-family="Liberation Serif,serif" fill="#111">
<svg x="966" y="717" width="60" height="31"><text x="2" y="23" font-size="21" font-weight="bold">AaBbC</text></svg>
<svg x="1038" y="717" width="60" height="31"><text x="2" y="22" font-size="29" font-weight="bold">AaBl</text></svg>
<svg x="1110" y="717" width="60" height="31"><text x="2" y="23" font-size="21" font-weight="bold">AaBbC</text></svg>
<svg x="1182" y="717" width="62" height="31"><text x="3" y="21" font-size="13" font-style="italic">AaBbCcDc</text></svg>
<svg x="1254" y="717" width="62" height="31"><text x="3" y="21" font-size="14" font-weight="bold">AaBbCcD</text></svg>
<svg x="1326" y="717" width="60" height="31"><text x="3" y="21" font-size="13">AaBbCcDd</text></svg>
<svg x="1398" y="717" width="60" height="31"><text x="3" y="21" font-size="13">AaBbCcDd</text></svg>
<svg x="1470" y="717" width="60" height="31"><text x="3" y="21" font-size="13" font-style="italic" fill="#888">AaBbCcDd</text></svg>
</g>
<text class="cj sl" x="998" y="762">标题</text><text class="cj sl" x="1070" y="762">标题 1</text><text class="cj sl" x="1142" y="762">副标题</text><text class="cj sl" x="1214" y="762">强调</text><text class="cj sl" x="1286" y="762">要点</text><text class="cj sl" x="1358" y="762">↵ 正文</text><text class="cj sl" x="1430" y="762">↵ 无间隔</text><text class="cj sl" x="1502" y="762">不明显强调</text>
<g fill="#dbe7f6" stroke="#b2c8e2"><rect x="1540" y="713" width="13" height="19" rx="2"/><rect x="1540" y="734" width="13" height="18"/><rect x="1540" y="753" width="13" height="18" rx="2"/></g>
<path d="M1544,725h6l-3,-3zM1544,741h6l-3,3zM1544,762h6l-3,3z" fill="#6a86ab"/><path d="M1544,759.500h6" stroke="#6a86ab"/>
<text x="1567" y="741" font-family="Liberation Sans,sans-serif" font-size="26" fill="#b050b0">A</text><text x="1577" y="741" font-family="Liberation Sans,sans-serif" font-size="26" fill="#5585cc">A</text>
<text class="cj tb" x="1559" y="760">更改样式</text><path d="M1579,771h6l-3,3z" fill="#5a7aa0"/>
<text class="cj tb" x="1643" y="723">查找</text><text class="cj tb" x="1643" y="746">替换</text><text class="cj tb" x="1643" y="767">选择</text>
<path d="M1671,718h6l-3,3zM1671,762h6l-3,3z" fill="#5a7aa0"/>
<path d="M1625,725V717L1628,713H1630V725ZM1633,725V717L1634,713H1636L1639,717V725Z" fill="#8098b8" stroke="#34507c"/>
<text x="1625" y="741" font-family="Liberation Sans,sans-serif" font-size="8" fill="#556">ab</text><text x="1630" y="748" font-family="Liberation Sans,sans-serif" font-size="8" font-weight="bold" fill="#488a38">ac</text>
<path d="M1628,757L1628,771L1631,768L1634,773L1636,772L1634,767H1638Z" fill="#fff" stroke="#445"/>
<!-- document -->
<g clip-path="url(#w)">
<rect x="500" y="817" width="952" height="223" fill="#c9e6cb"/>
<rect x="1452" y="817" width="5" height="223" fill="#5f7fa8" opacity=".5"/>
<rect x="588" y="817" width="703" height="223" fill="#fff"/>
<rect x="1678" y="836" width="15" height="204" fill="#86a5ce"/>
<rect x="1681" y="815" width="9" height="2" fill="#445"/><rect x="1680" y="822" width="10" height="9" fill="#e8eef8" stroke="#556"/>
<path d="M1681,846h10l-5,-4z" fill="#445"/>
<rect class="box" x="630.500" y="810" width="133" height="43"/>
<rect class="box" x="862.500" y="810" width="119" height="35"/>
<rect class="box" x="1068.500" y="810" width="197" height="10"/>
<rect class="box" x="727.500" y="864.500" width="184" height="169"/>
<rect class="box" x="734.500" y="912" width="80" height="43"/><rect class="box" x="822.500" y="912" width="89" height="43"/><rect class="box" x="734.500" y="978" width="84" height="44"/><rect class="box" x="822.500" y="978" width="83" height="44"/>
<rect class="box" x="937.500" y="864.500" width="183" height="165"/>
<rect class="box" x="943.500" y="912" width="85" height="47"/><rect class="box" x="1032.500" y="912" width="84" height="43"/><rect class="box" x="943.500" y="978" width="85" height="44"/><rect class="box" x="1034.500" y="978" width="82" height="44"/>
<rect class="box" x="1152.500" y="864.500" width="132" height="75"/>
<rect class="box" x="595.500" y="926" width="98" height="125"/>
<path d="M707.500,853V1040M1142.500,820V1040" stroke="#666"/>
<path d="M763,830H864M860,826L866,830L860,834M690,973L744,927M737,929L745,926L743,934M1152,892L1056,878M1063,875L1055,878L1061,883" fill="none" stroke="#8db0d8"/>
<path d="M1094,832L1070,866Q1065,872 1041,873" fill="none" stroke="#000" stroke-opacity=".2" stroke-width="3" transform="translate(1,2)"/>
<path d="M1096,832Q1082,850 1069,868Q1063,873 1041,874" fill="none" stroke="#d01020" stroke-width="2"/>
<g class="d">
<text class="d" x="639" y="835" letter-spacing=".5">号，从 001 开始计↵</text>
<text class="d" x="870" y="833">Batch N:001↵</text>
<text class="d" x="688" y="866" style="font-size:8px" fill="#777">↵</text><text class="d" x="688" y="884" style="font-size:8px" fill="#777">↵</text><text class="d" x="688" y="902" style="font-size:8px" fill="#777">↵</text><text class="d" x="688" y="919" style="font-size:8px" fill="#777">↵</text>
<text class="d dc" x="817" y="882">001_01</text><text class="d dc" x="817" y="899">Batch N:001↵</text>
<text class="d dc" x="773" y="929">001_01_01</text><text class="d dc" x="773" y="946">Batch N:001↵</text>
<text class="d dc" x="866" y="929">001_01_02</text><text class="d dc" x="866" y="946">Batch N:001↵</text>
<text class="d dc" x="775" y="995">001_01_03</text><text class="d dc" x="775" y="1012">Batch N:001↵</text>
<text class="d dc" x="863" y="995">001_01_04</text><text class="d dc" x="863" y="1012">Batch N:001↵</text>
<text class="d dc" x="1027" y="882">001_02</text><text class="d dc" x="1027" y="899">Batch N:001 ↵</text>
<text class="d dc" x="985" y="929">001_02_01</text><text class="d dc" x="985" y="946">Batch N:001↵</text>
<text class="d dc" x="1074" y="929">001_02_02</text><text class="d dc" x="1074" y="946">Batch N:001↵</text>
<text class="d dc" x="985" y="995">001_02_03</text><text class="d dc" x="985" y="1012">Batch N:001↵</text>
<text class="d dc" x="1075" y="995">001_02_04</text><text class="d dc" x="1075" y="1012">Batch N:001↵</text>
<text class="d" x="1161" y="882" letter-spacing="3">交货板在生产板中</text>
<text class="d" x="1161" y="899" letter-spacing="1.500">的编号，依次排序，</text>
<text class="d" x="1161" y="916" letter-spacing=".3">从 001_01 开始↵</text>
<text class="d" x="604" y="943" letter-spacing="2.200">如果是拼板交</text>
<text class="d" x="604" y="960" letter-spacing="2.200">货的，里面的</text>
<text class="d" x="604" y="977" letter-spacing=".6">每个 pcb 也要</text>
<text class="d" x="604" y="995" letter-spacing="2.200">编号。依次排</text>
<text class="d" x="604" y="1012">序</text><text class="d" x="638" y="1012">，</text><text class="d" x="671" y="1012">从</text>
<text class="d" x="604" y="1029">001_01_01</text><text class="d" x="671" y="1029">开</text>
<text class="d" x="604" y="1045">始</text>
</g>
<path d="M634,979q2,-2 4,0t4,0t4,0t4,0" fill="none" stroke="#d04040" stroke-width=".7"/>
<path d="M897,835h25M816,901h27M761,948h27M853,948h27M761,1014h27M850,1014h27M1024,901h27M972,948h27M1061,948h27M972,1014h27M1062,1014h27" stroke="#6aa860" stroke-width="1" stroke-dasharray="1.500 1"/>
</g>
</svg>
</body></html>
